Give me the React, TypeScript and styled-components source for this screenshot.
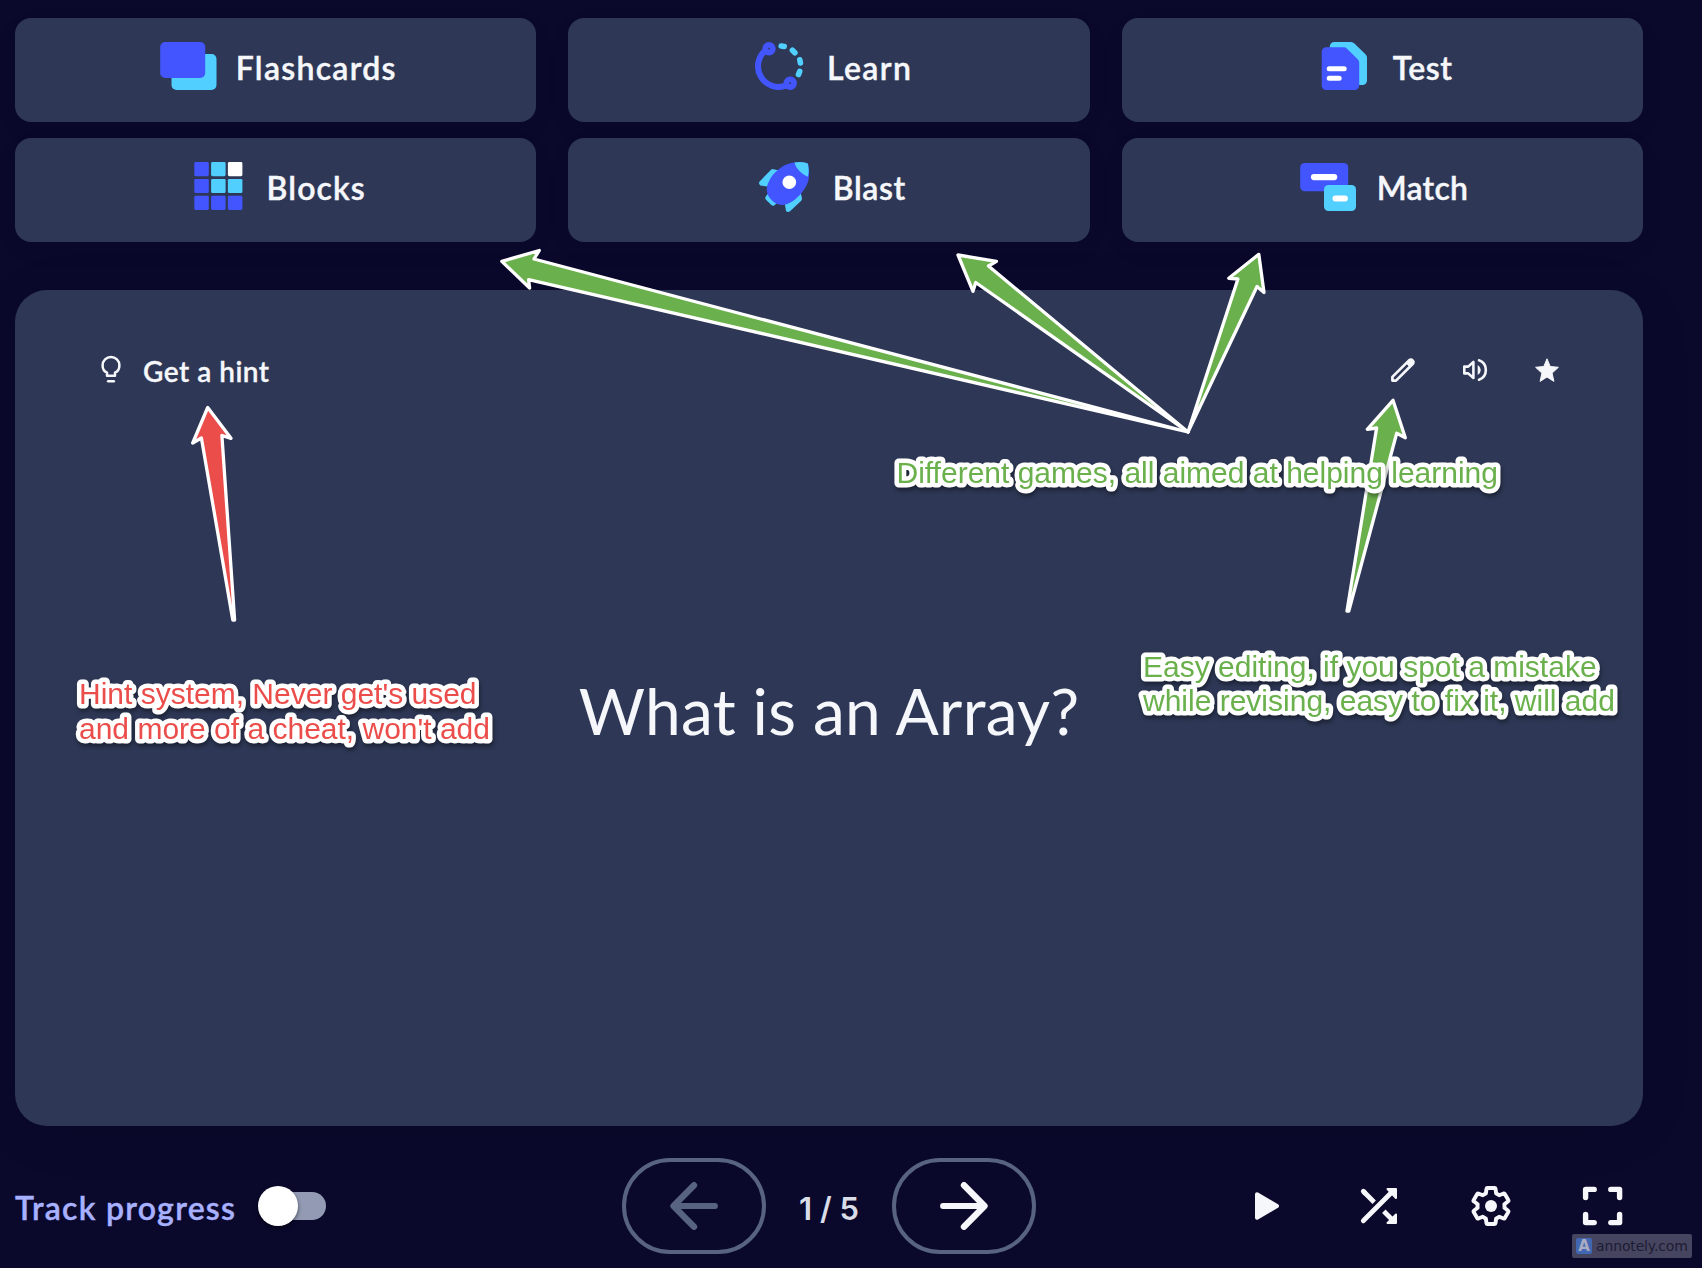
import React from 'react';
import styled, { createGlobalStyle } from 'styled-components';

const GlobalStyle = createGlobalStyle`
  *, *::before, *::after { box-sizing: border-box; }
  body {
    margin: 0;
    background: #0a092d;
    color: #f6f7fb;
    font-family: Lato, "Open Sans", sans-serif;
    overflow: hidden;
  }
  button { font: inherit; color: inherit; cursor: pointer; }
  svg { display: block; flex: none; }
`;

const Page = styled.main`
  position: relative;
  display: flex;
  flex-direction: column;
  width: 1702px;
  height: 1268px;
  padding: 18px 59px 14px 15px;
  overflow: hidden;
  background: #0a092b;
`;

const ModeGrid = styled.nav`
  display: grid;
  grid-template-columns: repeat(3, 1fr);
  gap: 16px 32px;
`;

const ModeButton = styled.button`
  display: flex;
  align-items: flex-start;
  justify-content: center;
  gap: 16px;
  height: 104px;
  padding: 16px 0 0;
  border: 0;
  border-radius: 16px;
  background: #2e3856;
  box-shadow: 0 8px 32px rgba(0, 0, 0, 0.03);
`;

const ModeLabel = styled.span<{ $tracking: number }>`
  margin-right: ${(p) => -p.$tracking}px;
  font-size: 32px;
  font-weight: 600;
  line-height: 67px;
  letter-spacing: ${(p) => p.$tracking}px;
  -webkit-text-stroke: 0.4px currentColor;
`;

const Card = styled.section`
  display: flex;
  flex-direction: column;
  height: 836px;
  margin-top: 48px;
  padding: 56px 80px 100px;
  border-radius: 32px;
  background: #2e3856;
  box-shadow: 0 8px 64px rgba(0, 0, 0, 0.05);
`;

const CardHeader = styled.header`
  display: flex;
  align-items: center;
  justify-content: space-between;
  height: 48px;
`;

const HintButton = styled.button`
  display: flex;
  align-items: center;
  gap: 16px;
  padding: 0;
  border: 0;
  background: none;
`;

const HintLabel = styled.span`
  padding-top: 2px;
  font-size: 28px;
  font-weight: 600;
  letter-spacing: 0.5px;
  -webkit-text-stroke: 0.3px currentColor;
`;

const CardActions = styled.div`
  display: flex;
  gap: 40px;
`;

const PlainButton = styled.button`
  padding: 0;
  border: 0;
  background: none;
`;

const Question = styled.div`
  display: flex;
  flex: 1;
  align-items: center;
  justify-content: center;
  font-size: 64px;
  letter-spacing: 0.3px;
`;

const Controls = styled.footer`
  display: grid;
  grid-template-columns: 1fr auto 1fr;
  align-items: center;
  height: 96px;
  margin-top: 32px;
`;

const TrackProgress = styled.label`
  display: flex;
  align-items: center;
  gap: 22px;
  color: #a8b1ff;
`;

const TrackLabel = styled.span`
  padding-top: 2px;
  font-size: 32px;
  font-weight: 600;
  letter-spacing: 1.25px;
  -webkit-text-stroke: 0.4px currentColor;
`;

const Toggle = styled.span`
  display: flex;
  align-items: center;
  width: 68px;
  height: 28px;
  border-radius: 14px;
  background: linear-gradient(90deg, transparent 20px, #939bb4 20px);
`;

const Knob = styled.span`
  width: 40px;
  height: 40px;
  border-radius: 50%;
  background: #fff;
  box-shadow: 0 2px 4px rgba(0, 0, 0, 0.5);
`;

const Pager = styled.div`
  display: flex;
  align-items: center;
`;

const PagerButton = styled.button`
  display: flex;
  align-items: center;
  justify-content: center;
  width: 144px;
  height: 96px;
  padding: 0;
  border: 4px solid #586380;
  border-radius: 48px;
  background: none;
  color: #f6f7fb;

  &:disabled { color: #586380; }
`;

const Counter = styled.span`
  width: 126px;
  padding-top: 4px;
  color: #d9dde8;
  font-family: Inter, sans-serif;
  font-size: 31px;
  font-weight: 600;
  text-align: center;
`;

const Tools = styled.div`
  display: flex;
  justify-content: flex-end;
  gap: 32px;
`;

const ToolButton = styled(PlainButton)`
  display: flex;
  justify-content: center;
  width: 80px;
`;

const AnnotationLayer = styled.svg`
  position: absolute;
  inset: 0;
  pointer-events: none;
`;

const ArrowShape = styled.polygon`
  stroke: #fff;
  stroke-width: 3.3px;
  stroke-linejoin: round;
`;

const NoteText = styled.text`
  font-family: "Liberation Sans", Arial, sans-serif;
  font-size: 30px;
  stroke: #fff;
  stroke-width: 9px;
  stroke-linejoin: round;
  paint-order: stroke fill;
  filter: drop-shadow(1px 3px 2px rgba(0, 0, 0, 0.4));
`;

const Watermark = styled.div`
  position: absolute;
  right: 10px;
  bottom: 10px;
  display: flex;
  align-items: center;
  gap: 4px;
  width: 120px;
  height: 24px;
  padding-left: 4px;
  border-radius: 2px;
  background: #464560;
  color: #1d1c33;
  font: 14px "DejaVu Sans", sans-serif;
  letter-spacing: -0.15px;
`;

const WatermarkLogo = styled.span`
  display: flex;
  align-items: center;
  justify-content: center;
  width: 16px;
  height: 16px;
  border-radius: 2px;
  background: #4267b2;
  color: #a9abc2;
  font: bold 15px "DejaVu Sans", sans-serif;
`;

const BLUE = '#4255ff';
const CYAN = '#51cfff';
const GREEN = '#6ab04c';
const RED = '#eb4d4b';

const FlashcardsIcon = () => (
  <svg width="64" height="64">
    <rect x="15.5" y="20" width="45" height="36" rx="5" fill={CYAN} />
    <rect x="4.2" y="8" width="45" height="36" rx="5" fill={BLUE} />
  </svg>
);

const LearnIcon = () => (
  <svg width="64" height="64" fill="none" strokeLinecap="round">
    <path d="M18.6 16.2 A20.7 20.7 0 0 0 39.5 51.4" stroke={BLUE} strokeWidth="6" />
    <circle cx="22" cy="14.7" r="3.8" stroke={BLUE} strokeWidth="5.8" />
    <circle cx="43.2" cy="49.2" r="3.8" stroke={BLUE} strokeWidth="5.8" />
    <path
      d="M34.2 12 L37.2 12.5 M45.4 16.2 L47.9 18.7 M52.8 25.8 L53.4 28.9 M52.7 37.4 L51.5 40.5"
      stroke={CYAN}
      strokeWidth="5.6"
    />
  </svg>
);

const TestIcon = () => (
  <svg width="64" height="64" viewBox="0.8 0 64 64">
    <path d="M17.6 12.5 a4.5 4.5 0 0 1 4.5 -4.5 H38.8 a4.5 4.5 0 0 1 3.4 1.5 L53.5 20.5 a4.5 4.5 0 0 1 1.3 3.2 V46.5 a4.5 4.5 0 0 1 -4.5 4.5 H17.6 Z" fill={CYAN} />
    <path d="M9.5 17.8 a4.5 4.5 0 0 1 4.5 -4.5 H31.5 a4.5 4.5 0 0 1 3.3 1.4 L45.7 25.4 a4.5 4.5 0 0 1 1.3 3.2 V51.5 a4.5 4.5 0 0 1 -4.5 4.5 H14 a4.5 4.5 0 0 1 -4.5 -4.5 Z" fill={BLUE} />
    <path d="M17 34.7 H32 M17 44.3 H27" stroke="#fff" strokeWidth="5" strokeLinecap="round" />
  </svg>
);

const BLOCK_COLORS = [BLUE, CYAN, '#fff', BLUE, CYAN, CYAN, BLUE, BLUE, BLUE];

const BlocksIcon = () => (
  <svg width="64" height="64">
    {BLOCK_COLORS.map((color, i) => (
      <rect key={i} x={7.3 + (i % 3) * 16.8} y={8 + Math.floor(i / 3) * 16.9} width="14.5" height="14.2" rx="1.4" fill={color} />
    ))}
  </svg>
);

const BlastIcon = () => (
  <svg width="64" height="64" viewBox="1 0 64 64">
    <g fill={CYAN}>
      <path d="M27 16.5 L21.5 15.2 Q20 14.8 18.8 16 L7.6 27.6 Q6 30 8.4 31.4 L15 32.6 Z" />
      <path d="M15.4 40 L13.4 43.2 Q12.9 44.6 14 45.8 L19.6 51.3 Q21 52.3 22.4 51.2 L25 49 Z" />
      <path d="M48.6 38.5 L49.9 44 Q50.2 45.6 49 47 L38 57.3 Q35.8 59 34 57 L32.8 49.8 Z" />
    </g>
    <path d="M55.9 9.3 C59 24 56.5 33.5 43.6 45 C33 53.5 25.5 51.6 20.3 46.8 C14.2 40.8 11.6 33.6 21 20.8 C31 9.5 41 6.3 55.9 9.3 Z" fill={BLUE} />
    <path d="M42.4 8.6 Q48.5 7.3 54.6 8.9 Q55.8 9.2 56.1 10.4 Q57.6 16.5 55.9 22.8 C50.5 21 44 15 42.4 8.6 Z" fill={CYAN} />
    <circle cx="37.3" cy="28.2" r="6.8" fill="#fff" />
  </svg>
);

const MatchIcon = () => (
  <svg width="64" height="64" viewBox="-1 0 64 64">
    <rect x="2.2" y="9" width="48" height="28.3" rx="4.5" fill={BLUE} />
    <path d="M16 23.1 H36.2" stroke="#fff" strokeWidth="6.2" strokeLinecap="round" />
    <rect x="26" y="31" width="32" height="26" rx="4.5" fill={CYAN} />
    <path d="M37.4 44.5 H47" stroke="#fff" strokeWidth="5.8" strokeLinecap="round" />
  </svg>
);

const BulbIcon = () => (
  <svg width="32" height="32" fill="none" stroke="currentColor" strokeWidth="2.5" strokeLinejoin="round">
    <path d="M12 21.8 V18.6 C9.2 17.3 7.6 14.6 7.6 11.4 a8.4 8.4 0 1 1 16.8 0 C24.4 14.6 22.8 17.3 20 18.6 V21.8 Z" />
    <path d="M13.2 27.2 H18.8" strokeWidth="2.6" strokeLinecap="round" />
  </svg>
);

const PencilIcon = () => (
  <svg width="32" height="32" fill="none" stroke="currentColor" strokeWidth="2.7" strokeLinejoin="round">
    <path d="M5.4 22.9 L22.3 6.1 a2.6 2.6 0 0 1 3.6 3.6 L9 26.6 H5.4 Z" />
    <path d="M19.6 9.5 L23 6 a2 2 0 0 1 3 3 L22.5 12.4 Z" fill="currentColor" strokeWidth="1" />
  </svg>
);

const SpeakerIcon = () => (
  <svg width="32" height="32" fill="none" stroke="currentColor" strokeWidth="2.6" strokeLinejoin="round">
    <path d="M5.3 12.6 H9.2 L14.4 8 V24 L9.2 19.4 H5.3 Z" />
    <path d="M18.7 11 Q21.8 13 21.8 16 Q21.8 19 18.7 21 Z" fill="currentColor" stroke="none" />
    <path d="M20 6.3 A10.3 10.3 0 0 1 20 25.7" strokeLinecap="round" />
  </svg>
);

const StarIcon = () => (
  <svg width="32" height="32" viewBox="0 0 32 32" fill="currentColor" stroke="currentColor" strokeLinejoin="round">
    <path d="M16 23 L22.9 27.4 L21.1 19.1 L27.4 13.3 L19.2 12.5 L16 4.8 L12.8 12.5 L4.6 13.3 L10.9 19.1 L9.1 27.4 Z" />
  </svg>
);

const ArrowIcon = ({ flip = false }: { flip?: boolean }) => (
  <svg width="48" height="48" fill="none" stroke="currentColor" strokeLinecap="round" strokeLinejoin="round">
    <g transform={flip ? 'matrix(-1 0 0 1 48 0)' : undefined}>
      <path d="M3 24 H42" strokeWidth="5.8" />
      <path d="M24 3.2 L44.5 24 L24 44.8" strokeWidth="6.4" />
    </g>
  </svg>
);

const PlayIcon = () => (
  <svg width="48" height="48" fill="currentColor" stroke="currentColor" strokeWidth="4" strokeLinejoin="round">
    <path d="M14 12.3 L34 24 L14 35.7 Z" />
  </svg>
);

const ShuffleIcon = () => (
  <svg width="48" height="48" fill="none" stroke="currentColor" strokeWidth="4.8" strokeLinecap="round">
    <path d="M8.3 38.7 L37 10" />
    <path d="M8.3 9.3 L19.2 20.2 M28.8 29.2 L37 37.5" strokeLinecap="butt" />
    <path d="M8.3 9.3 L10 11" />
    <path d="M32.5 7 H41 V16 Z M41 32.5 V41 H32.5 Z" fill="currentColor" strokeWidth="2" strokeLinejoin="round" />
  </svg>
);

const GearIcon = () => (
  <svg width="48" height="48" viewBox="-0.8 -0.8 25.6 25.6" fill="none" stroke="currentColor" strokeWidth="2.1" strokeLinejoin="round">
    <path d="M19.14 12.94c.04-.3.06-.61.06-.94 0-.32-.02-.64-.07-.94l2.03-1.58c.18-.14.23-.41.12-.61l-1.92-3.32c-.12-.22-.37-.29-.59-.22l-2.39.96c-.5-.38-1.03-.7-1.62-.94l-.36-2.54c-.04-.24-.24-.41-.48-.41h-3.84c-.24 0-.43.17-.47.41l-.36 2.54c-.59.24-1.13.57-1.62.94l-2.39-.96c-.22-.08-.47 0-.59.22L2.74 8.87c-.12.21-.08.47.12.61l2.03 1.58c-.05.3-.09.63-.09.94s.02.64.07.94l-2.03 1.58c-.18.14-.23.41-.12.61l1.92 3.32c.12.22.37.29.59.22l2.39-.96c.5.38 1.03.7 1.62.94l.36 2.54c.05.24.24.41.48.41h3.84c.24 0 .44-.17.47-.41l.36-2.54c.59-.24 1.13-.56 1.62-.94l2.39.96c.22.08.47 0 .59-.22l1.92-3.32c.12-.22.07-.47-.12-.61l-2.02-1.58z" />
    <circle cx="12" cy="12" r="3.2" fill="currentColor" stroke="none" />
  </svg>
);

const FullscreenIcon = () => (
  <svg width="48" height="48" fill="none" stroke="currentColor" strokeWidth="5.4" strokeLinecap="round" strokeLinejoin="round">
    <path d="M6.6 15.6 V7.4 H15.2 M31.8 7.4 H40.6 V15.6 M40.6 32.4 V40.6 H31.8 M15.2 40.6 H6.6 V32.4" />
  </svg>
);

const MODES = [
  { name: 'Flashcards', Icon: FlashcardsIcon, tracking: 1.28 },
  { name: 'Learn', Icon: LearnIcon, tracking: 1.4 },
  { name: 'Test', Icon: TestIcon, tracking: 0.5 },
  { name: 'Blocks', Icon: BlocksIcon, tracking: 1.1 },
  { name: 'Blast', Icon: BlastIcon, tracking: 0.6 },
  { name: 'Match', Icon: MatchIcon, tracking: 0.25 },
];

const TOOLS = [
  { name: 'Play', Icon: PlayIcon },
  { name: 'Shuffle', Icon: ShuffleIcon },
  { name: 'Settings', Icon: GearIcon },
  { name: 'Full screen', Icon: FullscreenIcon },
];

const ARROWS = [
  { fill: GREEN, points: '501.8,261.3 539.3,250.5 534,259 1188,432 528.6,279.6 529.6,288' },
  { fill: GREEN, points: '958,255 996.5,261.3 988.5,266 1188,432 975.7,282.5 973,291.3' },
  { fill: GREEN, points: '1258.8,254.3 1228.8,278.3 1237.9,279 1188,432 1257,286.5 1264,292.5' },
  { fill: GREEN, points: '1393,400.3 1367.3,429.3 1376.6,428 1347,611 1348.8,611 1396.7,433.3 1405.3,437.7' },
  { fill: RED, points: '207.7,407.5 192.7,443 201.4,438 232.8,620 234.6,620 221.9,435.5 231,438.3' },
];

const NOTES = [
  { x: 896.5, y: 483, fill: GREEN, text: 'Different games, all aimed at helping learning' },
  { x: 79, y: 704, fill: RED, text: "Hint system, Never get's used" },
  { x: 79, y: 739, fill: RED, text: "and more of a cheat, won't add" },
  { x: 1143, y: 677, fill: GREEN, text: 'Easy editing, if you spot a mistake' },
  { x: 1143, y: 711, fill: GREEN, text: 'while revising, easy to fix it, will add' },
];

export default function App() {
  return (
    <>
      <GlobalStyle />
      <Page>
        <ModeGrid>
          {MODES.map(({ name, Icon, tracking }) => (
            <ModeButton key={name}>
              <Icon />
              <ModeLabel $tracking={tracking}>{name}</ModeLabel>
            </ModeButton>
          ))}
        </ModeGrid>

        <Card>
          <CardHeader>
            <HintButton>
              <BulbIcon />
              <HintLabel>Get a hint</HintLabel>
            </HintButton>
            <CardActions>
              <PlainButton aria-label="Edit"><PencilIcon /></PlainButton>
              <PlainButton aria-label="Listen"><SpeakerIcon /></PlainButton>
              <PlainButton aria-label="Star"><StarIcon /></PlainButton>
            </CardActions>
          </CardHeader>
          <Question>What is an Array?</Question>
        </Card>

        <Controls>
          <TrackProgress>
            <TrackLabel>Track progress</TrackLabel>
            <Toggle><Knob /></Toggle>
          </TrackProgress>
          <Pager>
            <PagerButton disabled aria-label="Previous"><ArrowIcon flip /></PagerButton>
            <Counter>1 / 5</Counter>
            <PagerButton aria-label="Next"><ArrowIcon /></PagerButton>
          </Pager>
          <Tools>
            {TOOLS.map(({ name, Icon }) => (
              <ToolButton key={name} aria-label={name}><Icon /></ToolButton>
            ))}
          </Tools>
        </Controls>

        <AnnotationLayer width="1702" height="1268">
          {ARROWS.map(({ fill, points }) => (
            <ArrowShape key={points} points={points} fill={fill} />
          ))}
          {NOTES.map(({ x, y, fill, text }) => (
            <NoteText key={text} x={x} y={y} fill={fill}>{text}</NoteText>
          ))}
        </AnnotationLayer>

        <Watermark>
          <WatermarkLogo>A</WatermarkLogo>
          annotely.com
        </Watermark>
      </Page>
    </>
  );
}
